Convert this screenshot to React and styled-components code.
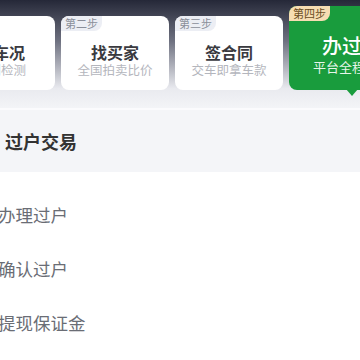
import styled, { createGlobalStyle } from 'styled-components'

const Global = createGlobalStyle`
body{margin:0;background:#fff;font-family:"Noto Sans CJK SC","Noto Sans",sans-serif;}
`

const Page = styled.div`
width:360px;
height:360px;
overflow:hidden;
background:#fff;
`
const Top = styled.div`
height:108px;
background:linear-gradient(180deg,#252838 0%,#6e7180 38%,#e9eaef 82%,#f3f4f7 100%);
border-bottom:2px solid #fbfbfd;
overflow:hidden;
`
const Steps = styled.div`
display:flex;
align-items:flex-start;
gap:6px;
margin-left:-53px;
padding-top:16px;
`
const Card = styled.div`
position:relative;
flex:none;
width:108px;
height:74px;
background:#fff;
border-radius:8px;
box-sizing:border-box;
padding-top:26px;
text-align:center;
`
const ActiveCard = styled(Card)`
width:126px;
height:84px;
margin-top:-10px;
background:#199c3d;
padding-top:27px;
&::after{
  content:"";
  position:absolute;
  left:57px;
  bottom:-6px;
  width:0;height:0;
  border-left:6px solid transparent;
  border-right:6px solid transparent;
  border-top:7px solid #199c3d;
}
`
const Badge = styled.span`
position:absolute;
left:0;
top:0;
padding:0 4px;
height:15px;
line-height:15px;
font-size:11px;
border-radius:8px 0 8px 0;
background:${p => p.$active ? '#f6ddb2' : '#eceef4'};
color:${p => p.$active ? '#6b4d1f' : '#8a8e99'};
`
const Title = styled.div`
font-size:16px;
font-weight:700;
line-height:20px;
color:#3a3a3f;
`
const ActiveTitle = styled(Title)`
font-size:20px;
line-height:26px;
font-weight:500;
color:#fff;
`
const Sub = styled.div`
font-size:12.5px;
line-height:16px;
color:#b4b6bd;
white-space:nowrap;
`
const ActiveSub = styled(Sub)`
font-size:13px;
color:#e6f5ea;
`
const Section = styled.div`
height:62px;
background:#f4f5f8;
display:flex;
align-items:center;
padding-left:5px;
font-size:18px;
font-weight:700;
color:#333;
`
const List = styled.div`
padding-top:16px;
`
const Item = styled.div`
height:54px;
line-height:54px;
margin-left:-2px;
font-size:17.5px;
color:#6a6d75;
`

const steps = [
  { n: '第一步', t: '看车况', s: '上门检测' },
  { n: '第二步', t: '找买家', s: '全国拍卖比价' },
  { n: '第三步', t: '签合同', s: '交车即拿车款' },
]

export default function App() {
  return (
    <Page>
      <Global />
      <Top>
        <Steps>
          {steps.map((st, i) => (
            <Card key={i}>
              <Badge>{st.n}</Badge>
              <Title>{st.t}</Title>
              <Sub>{st.s}</Sub>
            </Card>
          ))}
          <ActiveCard>
            <Badge $active>第四步</Badge>
            <ActiveTitle>办过户</ActiveTitle>
            <ActiveSub>平台全程服务</ActiveSub>
          </ActiveCard>
        </Steps>
      </Top>
      <Section>过户交易</Section>
      <List>
        <Item>办理过户</Item>
        <Item>确认过户</Item>
        <Item>提现保证金</Item>
      </List>
    </Page>
  )
}
